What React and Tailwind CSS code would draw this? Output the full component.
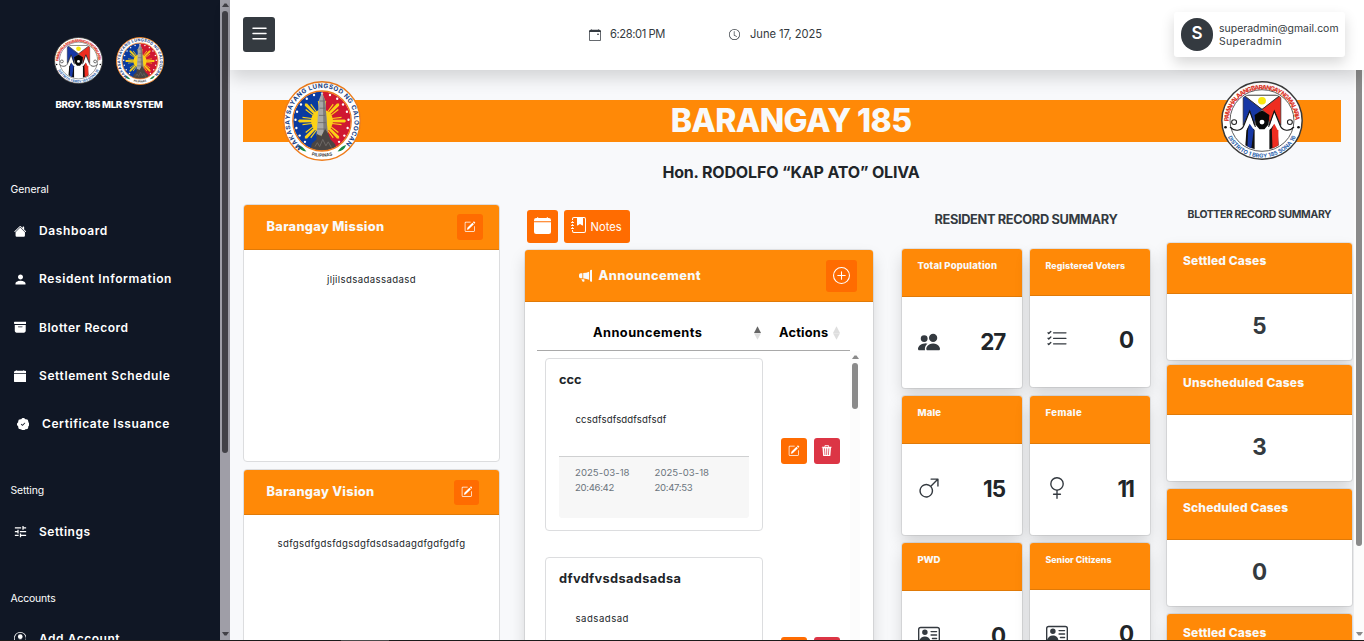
import {
  BsArchiveFill, BsCalendarEvent, BsCalendarFill, BsClock, BsGenderFemale, BsGenderMale,
  BsHouseFill, BsJournalBookmarkFill, BsList, BsListCheck, BsMegaphoneFill, BsPatchCheckFill,
  BsPencilSquare, BsPeopleFill, BsPersonCircle, BsPersonVcard, BsPlusCircle, BsTrash3Fill,
} from "react-icons/bs";
import { MdPerson, MdTune } from "react-icons/md";

function CitySeal({ className }) {
  const stars = Array.from({ length: 17 }, (_, i) => {
    const a = ((i * 17.5 - 230) * Math.PI) / 180;
    return [50 + 34 * Math.cos(a), 50 + 34 * Math.sin(a)];
  });
  return (
    <svg className={className} viewBox="0 0 100 100" preserveAspectRatio="none">
      <defs>
        <path id="cityTop" d="M24.5 83 A41.5 41.5 0 1 1 75.5 83" />
        <path id="cityBottom" d="M31 90.5 A45 45 0 0 0 69 90.5" />
        <clipPath id="cityDisc"><circle cx="50" cy="50" r="37" /></clipPath>
      </defs>
      <circle cx="50" cy="50" r="49" fill="#fff" stroke="#ee7d1c" strokeWidth="1.8" />
      <g clipPath="url(#cityDisc)">
        <rect x="10" y="10" width="40" height="80" fill="#0a3ba0" />
        <rect x="50" y="10" width="40" height="80" fill="#d01831" />
        {stars.map(([x, y], i) => <circle key={i} cx={x} cy={y} r="1.5" fill="#fff" />)}
        <g fill="#fbd116">
          <circle cx="50" cy="50" r="14" />
          {[0, 45, 90, 135, 180, 225, 270, 315].map((a) => (
            <g key={a} transform={`rotate(${a} 50 50)`}>
              <path d="M62 48.5 L79 48 L81 50 L79 52 L62 51.5 Z" />
              <path d="M63 46.4 L75 44.6 L75 46.2 L63 47.6 Z M63 53.6 L75 55.4 L75 53.8 L63 52.4 Z" />
            </g>
          ))}
        </g>
        <path d="M46 24 L50 14 L54 24 L57.5 68 L43 68 Z" fill="#a8a8a6" />
        <path d="M51 18 L54 24 L57.5 68 L52 68 Z" fill="#7d7c7b" />
        <path d="M47 25 h6 M47 34 h7 M46 43 h8 M45 52 h10 M44 60 h12" stroke="#686766" strokeWidth="1" />
        <path d="M34 90 L37 78 L43 73 L43 66 L49 69 L54 60 L58 66 L61 73 L67 79 L69 90 Z" fill="#4a4543" />
        <path d="M41 82 l3 -5 l3 5 l4 -9 l4 8 l3 -5 l4 7" fill="none" stroke="#6f6b68" strokeWidth="1.2" />
      </g>
      <circle cx="50" cy="50" r="37.5" fill="none" stroke="#ee7d1c" strokeWidth="1.6" />
      <path d="M19 80 q6 1 11 8 q-8 0 -11 -8 M81 80 q-6 1 -11 8 q8 0 11 -8" fill="#188a45" />
      <text fill="#173f86" fontFamily="Inter, sans-serif" fontSize="8" fontWeight="700">
        <textPath href="#cityTop" textLength="199" lengthAdjust="spacing">MAKASAYSAYANG LUNGSOD NG CALOOCAN</textPath>
      </text>
      <text fill="#3c3c3c" fontFamily="Inter, sans-serif" fontSize="5.6" fontWeight="700">
        <textPath href="#cityBottom" startOffset="50%" textAnchor="middle">PILIPINAS</textPath>
      </text>
    </svg>
  );
}

function BarangaySeal({ className }) {
  return (
    <svg className={className} viewBox="0 0 100 100" preserveAspectRatio="none">
      <defs>
        <path id="brgyTop" d="M9.5 51 A40.5 40.5 0 0 1 90.5 51" />
        <path id="brgyBottom" d="M6.5 66 A46 46 0 0 0 93.5 66" />
        <clipPath id="brgyDisc"><circle cx="50" cy="50" r="37.5" /></clipPath>
      </defs>
      <circle cx="50" cy="50" r="49" fill="#fff" stroke="#3a3a3a" strokeWidth="1.8" />
      <circle cx="50" cy="50" r="39" fill="#fff" stroke="#555" strokeWidth="1.2" />
      <g clipPath="url(#brgyDisc)">
        <path d="M28 18 H72 L50 36 Z" fill="#fff" stroke="#333" strokeWidth="1.2" />
        <circle cx="50" cy="25" r="4.8" fill="#f8e60f" />
        <path d="M27 18 L50 36 L43 43 L40 56 L35 38 L27 56 Z" fill="#1738a5" stroke="#222" strokeWidth="0.8" />
        <path d="M73 18 L50 36 L57 43 L60 56 L65 38 L73 56 Z" fill="#ee2d20" stroke="#222" strokeWidth="0.8" />
        <path d="M29 92 L31 62 L35 50 L41 62 L41 92 Z" fill="#111" />
        <path d="M71 92 L69 62 L65 50 L59 62 L59 92 Z" fill="#111" />
        <path d="M32 92 L33 62 L35 52 L40 62 L36 92 Z" fill="#1738a5" />
        <path d="M63 92 L62 62 L65 52 L70 62 L70 92 Z" fill="#ee2d20" />
        <path d="M27 62 L35 38 L42 62 L39 60 L35 54 L31 62 Z M73 62 L65 38 L58 62 L61 60 L65 54 L69 62 Z" fill="#fff" />
      </g>
      <path d="M11 58 C16 64 25 64 28 56 L35 38 L42 58 M89 58 C84 64 75 64 72 56 L65 38 L58 58" fill="none" stroke="#111" strokeWidth="1.4" />
      <path d="M50 37 L59 43 L58 55 L53 61 H47 L42 55 L41 43 Z" fill="#080808" />
      <circle cx="50" cy="52" r="3" fill="#fff" />
      <circle cx="16" cy="52" r="3" fill="#fff" stroke="#222" strokeWidth="1.3" />
      <circle cx="84" cy="52" r="3" fill="#fff" stroke="#222" strokeWidth="1.3" />
      <circle cx="5.5" cy="58.5" r="1.6" fill="#111" />
      <circle cx="94.5" cy="58.5" r="1.6" fill="#111" />
      <text fill="#dc3a2c" fontFamily="Inter, sans-serif" fontSize="7.8" fontWeight="800">
        <textPath href="#brgyTop" textLength="126" lengthAdjust="spacing">PAMAHALAANG BARANGAY NG MALARIA</textPath>
      </text>
      <text fill="#2a62ad" fontFamily="Inter, sans-serif" fontSize="7" fontWeight="700">
        <textPath href="#brgyBottom" startOffset="50%" textAnchor="middle">DISTRITO 1 BRGY 185 SONA 16</textPath>
      </text>
    </svg>
  );
}

function NavItem({ icon, label, tracking, className = "" }) {
  return (
    <a className={`flex h-[18px] items-center text-[12px] font-semibold leading-[18px] ${className}`}>
      <span className="flex w-[25.5px] shrink-0 text-[12.5px]">{icon}</span>
      <span className={`whitespace-nowrap ${tracking}`}>{label}</span>
    </a>
  );
}

function Arrow({ up, color }) {
  return (
    <svg width="7" height="4" viewBox="0 0 7 4" className="shrink-0">
      <path d={up ? "M0 4 L2.5 0.6 H4.5 L7 4 Z" : "M0 0 L2.5 3.4 H4.5 L7 0 Z"} fill={color} />
    </svg>
  );
}

function Sidebar() {
  return (
    <aside className="flex h-full w-[230px] shrink-0">
      <nav className="flex w-[220px] flex-col overflow-hidden bg-[#101725] text-white">
        <div className="mt-[37px] flex h-[48px] shrink-0 gap-[13px] pl-[54px]">
          <BarangaySeal className="h-[47px] w-[49px]" />
          <CitySeal className="h-[48px] w-[48px]" />
        </div>
        <h1 className="mt-[13px] h-[14px] shrink-0 whitespace-nowrap pr-[2px] text-center text-[9.6px] font-extrabold leading-[14px] tracking-[-0.38px]">BRGY. 185 MLR SYSTEM</h1>
        <h2 className="mt-[70px] h-[16px] shrink-0 pl-[10.5px] text-[10.4px] leading-[16px]">General</h2>
        <div className="mt-[24px] flex shrink-0 flex-col gap-[30.3px] pl-[13.5px]">
          <NavItem icon={<BsHouseFill />} label="Dashboard" tracking="tracking-[0.63px]" />
          <NavItem icon={<MdPerson className="-ml-px text-[15px]" />} label="Resident Information" tracking="tracking-[0.62px]" />
          <NavItem icon={<BsArchiveFill className="mb-px" />} label="Blotter Record" tracking="tracking-[0.52px]" />
          <NavItem icon={<BsCalendarFill />} label="Settlement Schedule" tracking="tracking-[0.6px]" />
          <NavItem icon={<BsPatchCheckFill />} label="Certificate Issuance" tracking="tracking-[0.57px]" className="pl-[3px]" />
        </div>
        <h2 className="mt-[49.5px] h-[16px] shrink-0 pl-[10.5px] text-[10.4px] leading-[16px] tracking-[-0.12px]">Setting</h2>
        <div className="mt-[24px] shrink-0 pl-[13.5px]">
          <NavItem icon={<MdTune className="-ml-px text-[15px]" />} label="Settings" tracking="tracking-[0.49px]" />
        </div>
        <h2 className="mt-[50px] h-[16px] shrink-0 pl-[10.5px] text-[10.4px] leading-[16px] tracking-[-0.17px]">Accounts</h2>
        <div className="mt-[23px] shrink-0 pl-[13.5px]">
          <NavItem icon={<BsPersonCircle />} label="Add Account" tracking="tracking-[0.52px]" />
        </div>
      </nav>
      <div className="flex w-[10px] flex-col items-center bg-[#9f9ea7] pt-[2.5px]">
        <Arrow up color="#424147" />
        <div className="mt-[4px] h-[442px] w-[6px] rounded-full bg-[#424147]" />
        <div className="grow" />
        <Arrow color="#424147" />
        <div className="h-[4px]" />
      </div>
    </aside>
  );
}

function Header() {
  return (
    <header className="relative z-10 flex h-[70px] w-full shrink-0 bg-white text-[#343a40] shadow-[0_8px_16px_rgba(0,0,0,0.15)]">
      <button className="ml-[13px] mt-[17px] flex h-[35px] w-[32px] items-center justify-center rounded-[3px] bg-[#343a40] pb-[3px] text-[21px] text-white">
        <BsList />
      </button>
      <div className="ml-[314px] flex h-[68px] items-center text-[11.2px]">
        <BsCalendarEvent className="mt-px text-[12px]" />
        <span className="ml-[9px] w-[55px] whitespace-nowrap tracking-[-0.41px]">6:28:01 PM</span>
        <BsClock className="ml-[64px] text-[11px]" />
        <span className="ml-[10px] whitespace-nowrap tracking-[-0.05px]">June 17, 2025</span>
      </div>
      <div className="ml-auto mr-[19px] mt-[12px] flex h-[45px] w-[171px] items-center rounded-[3px] bg-white pl-[7px] shadow-[0_6px_14px_rgba(0,0,0,0.16)]">
        <div className="flex h-[33px] w-[32px] items-center justify-center rounded-full bg-[#343a40] pb-px text-[17px] font-semibold text-white">S</div>
        <div className="ml-[6px] flex flex-col text-[10.4px] leading-[13px]">
          <span className="tracking-[0.05px]">superadmin@gmail.com</span>
          <span className="tracking-[0.39px]">Superadmin</span>
        </div>
      </div>
    </header>
  );
}

function Banner() {
  return (
    <section className="h-[134px] shrink-0 pl-[13px]">
      <div className="mt-[10px] flex h-[81px] w-[1098px] items-center">
        <div className="flex h-[42px] w-full items-center justify-between bg-[#ff8907]">
          <CitySeal className="ml-[40px] h-[80px] w-[78px] shrink-0" />
          <h2 className="mt-px whitespace-nowrap text-[32px] font-extrabold leading-[42px] tracking-[-0.65px] text-[#f8f9fa]">BARANGAY 185</h2>
          <BarangaySeal className="mb-[1px] mr-[38px] h-[79px] w-[82px] shrink-0" />
        </div>
      </div>
      <p className="mt-[-1px] w-[1096px] text-center text-[16px] font-bold leading-[24px] tracking-[-0.16px] text-[#212529]">Hon. RODOLFO “KAP ATO” OLIVA</p>
    </section>
  );
}

function TextCard({ title, titleClass, editClass, text, textClass }) {
  return (
    <article className="flex h-[258px] w-[257px] shrink-0 flex-col overflow-hidden rounded-[4px] border border-[#dcdddf] bg-white">
      <div className="flex h-[45px] shrink-0 items-center justify-between border-b border-[#e07a08] bg-[#ff8907] pl-[22.5px]">
        <h3 className={`whitespace-nowrap text-[12.8px] font-extrabold text-[#f8f9fa] ${titleClass}`}>{title}</h3>
        <button className={`flex items-center justify-center rounded-[3px] bg-[#ff6c01] pb-px text-[11.5px] text-white ${editClass}`}><BsPencilSquare /></button>
      </div>
      <p className={`text-center text-[9.6px] leading-[14px] text-[#212529] ${textClass}`}>{text}</p>
    </article>
  );
}

function Note({ title, titleClass, text, textClass }) {
  return (
    <div className="flex h-[199px] shrink-0 pl-[8px]">
      <div className="h-[173px] w-[218px] shrink-0 rounded-[4px] border border-[#dcdddf] bg-white px-[13px] pt-[12px]">
        <h4 className={`text-[12.8px] font-bold leading-[18px] text-[#212529] ${titleClass}`}>{title}</h4>
        <p className={`mt-[24px] pl-[16.5px] text-[9.6px] leading-[14px] text-[#212529] ${textClass}`}>{text}</p>
        <div className="mt-[29px] flex h-[62px] gap-[24.5px] rounded-b-[3px] border-t border-[#cfd0d1] bg-[#f7f7f7] pl-[16px] pt-[8px] text-[9.6px] leading-[15px] text-[#6c757d]">
          <span className="w-[55px]"><span className="tracking-[0.03px]">2025-03-18</span> <span className="tracking-[-0.33px]">20:46:42</span></span>
          <span className="w-[55px]"><span className="tracking-[0.03px]">2025-03-18</span> <span className="tracking-[-0.33px]">20:47:53</span></span>
        </div>
      </div>
      <div className="ml-[18px] mt-[80px] flex h-[26px] gap-[7px] text-white">
        <button className="flex w-[26px] items-center justify-center rounded-[3px] bg-[#ff6c01] pb-px text-[11.5px]"><BsPencilSquare /></button>
        <button className="flex w-[26px] items-center justify-center rounded-[3px] bg-[#dc3545] pb-px pr-px text-[11.5px]"><BsTrash3Fill /></button>
      </div>
    </div>
  );
}

function Sorter({ active }) {
  return (
    <svg width="7" height="14" viewBox="0 0 7 14" className="shrink-0">
      <path d="M3.5 0.2 L7 7 H0 Z" fill={active ? "#666" : "#dedede"} />
      <path d="M3.5 13.8 L7 7.3 H0 Z" fill="#dedede" />
    </svg>
  );
}

function Announcements() {
  return (
    <section className="ml-[25px] flex w-[348px] shrink-0 flex-col pt-[6px] text-white">
      <div className="flex gap-[6px] pl-[2px]">
        <button className="flex h-[33px] w-[31px] justify-center rounded-[3px] bg-[#ff6c01] pt-[7px] text-[17px]"><BsCalendarFill /></button>
        <button className="flex h-[33px] w-[66px] rounded-[3px] bg-[#ff6c01] pl-[7px] pt-[7px]">
          <BsJournalBookmarkFill className="text-[16px]" />
          <span className="ml-[3.5px] mt-[3px] text-[11.2px] leading-[14px]">Notes</span>
        </button>
      </div>
      <div className="mt-[7px] flex h-[420px] flex-col rounded-[4px] bg-white shadow-[0_8px_16px_rgba(0,0,0,0.15),0_0_0_1px_rgba(0,0,0,0.08)]">
        <div className="flex h-[52px] shrink-0 items-center rounded-t-[3px] border-b border-[#e07a08] bg-[#ff8907] pl-[53.5px] pr-[16px]">
          <BsMegaphoneFill className="text-[13.5px] text-[#f8f9fa]" />
          <h3 className="ml-[6.5px] text-[12.8px] font-extrabold tracking-[0.36px] text-[#f8f9fa]">Announcement</h3>
          <button className="ml-auto flex h-[32px] w-[31px] items-center justify-center rounded-[3px] bg-[#ff6c01] pb-px text-[17px]"><BsPlusCircle /></button>
        </div>
        <div className="ml-[12px] mt-[12px] flex h-[37px] w-[313px] shrink-0 items-center border-b border-[#a9a9a9] pl-[56px] pt-px text-[12.8px] font-bold text-black">
          <span className="w-[161px] tracking-[0.46px]">Announcements</span>
          <Sorter active />
          <span className="ml-[18px] w-[54px] tracking-[0.2px]">Actions</span>
          <Sorter />
        </div>
        <div className="flex grow overflow-hidden pl-[12px]">
          <div className="flex w-[313px] flex-col pt-[7px]">
            <Note title="ccc" titleClass="" text="ccsdfsdfsddfsdfsdf" textClass="tracking-[0.14px]" />
            <Note title="dfvdfvsdsadsadsa" titleClass="tracking-[0.36px]" text="sadsadsad" textClass="tracking-[0.5px]" />
          </div>
          <div className="flex w-[10px] flex-col items-center bg-[#fcfcfc] pt-[4px]">
            <Arrow up color="#8a8a8a" />
            <div className="mt-[4px] h-[46px] w-[6px] rounded-full bg-[#8a8a8a]" />
          </div>
        </div>
      </div>
    </section>
  );
}

function StatCard({ title, titleClass, headClass, bodyClass = "pb-px", icon, value, valueClass }) {
  return (
    <div className="flex w-[120px] shrink-0 flex-col overflow-hidden rounded-[3px] bg-white shadow-[0_8px_16px_rgba(0,0,0,0.15),0_0_0_1px_rgba(0,0,0,0.08)]">
      <h4 className={`shrink-0 whitespace-nowrap border-b border-[#e07a08] bg-[#ff8907] pl-[15.5px] pt-[10px] font-extrabold leading-[14px] text-[#f8f9fa] ${headClass} ${titleClass}`}>{title}</h4>
      <div className={`flex h-[91px] items-center justify-between pl-[16px] pr-[17px] text-[#343a40] ${bodyClass}`}>
        <span className="flex w-[23px] pb-px text-[22px]">{icon}</span>
        <span className={`text-[22.4px] font-bold leading-[30px] text-[#212529] ${valueClass}`}>{value}</span>
      </div>
    </div>
  );
}

function Residents() {
  return (
    <section className="ml-[29px] flex w-[248px] shrink-0 flex-col pt-[6px]">
      <h3 className="whitespace-nowrap text-center text-[12.8px] font-bold leading-[19px] tracking-[-0.36px] text-[#343a40]">RESIDENT RECORD SUMMARY</h3>
      <div className="mt-[20px] flex gap-[8px]">
        <div className="flex flex-col gap-[8px]">
          <StatCard title="Total Population" titleClass="text-[9.6px] tracking-[0.17px]" headClass="h-[48px]" icon={<BsPeopleFill />} value="27" valueClass="tracking-[-1.2px]" />
          <StatCard title="Male" titleClass="text-[9.6px] tracking-[0.15px]" headClass="h-[48px]" bodyClass="pb-[2px]" icon={<BsGenderMale />} value="15" valueClass="tracking-[-1px]" />
          <StatCard title="PWD" titleClass="text-[9.6px] tracking-[-0.15px]" headClass="h-[48px]" bodyClass="pb-[2px]" icon={<BsPersonVcard />} value="0" valueClass="tracking-[-1px]" />
        </div>
        <div className="flex flex-col gap-[8px]">
          <StatCard title="Registered Voters" titleClass="text-[8.8px] tracking-[0.1px]" headClass="h-[47px]" bodyClass="pb-[4px]" icon={<BsListCheck />} value="0" valueClass="tracking-[-1px]" />
          <div className="mt-px flex">
            <StatCard title="Female" titleClass="text-[9.6px] tracking-[0.4px]" headClass="h-[48px]" bodyClass="pb-[2px]" icon={<BsGenderFemale />} value="11" valueClass="tracking-[-1.9px]" />
          </div>
          <StatCard title="Senior Citizens" titleClass="text-[8.8px]" headClass="h-[47px]" bodyClass="pb-[3px]" icon={<BsPersonVcard />} value="0" valueClass="tracking-[-1px]" />
        </div>
      </div>
    </section>
  );
}

function CaseCard({ title, tracking, value, headClass, className = "" }) {
  return (
    <div className={`flex w-[185px] shrink-0 flex-col overflow-hidden rounded-[3px] bg-white shadow-[0_8px_16px_rgba(0,0,0,0.15),0_0_0_1px_rgba(0,0,0,0.08)] ${className}`}>
      <h4 className={`shrink-0 border-b border-[#e07a08] bg-[#ff8907] pl-[16px] text-[12px] font-extrabold leading-[18px] text-[#f8f9fa] ${headClass} ${tracking}`}>{title}</h4>
      <div className="flex h-[66px] items-center justify-center pb-[3px] text-[22.4px] font-bold text-[#343a40]">{value}</div>
    </div>
  );
}

function Blotter() {
  return (
    <section className="ml-[17px] flex w-[185px] shrink-0 flex-col pt-[3px]">
      <h3 className="whitespace-nowrap text-center text-[10.4px] font-bold leading-[16px] tracking-[-0.32px] text-[#343a40]">BLOTTER RECORD SUMMARY</h3>
      <CaseCard title="Settled Cases" tracking="tracking-[0.13px]" value="5" headClass="h-[51px] pt-[9px]" className="mt-[20px]" />
      <CaseCard title="Unscheduled Cases" tracking="tracking-[0.17px]" value="3" headClass="h-[50px] pt-[9px]" className="mt-[5px]" />
      <CaseCard title="Scheduled Cases" tracking="tracking-[0.15px]" value="0" headClass="h-[51px] pt-[10px]" className="mt-[8px]" />
      <CaseCard title="Settled Cases" tracking="tracking-[0.13px]" value="0" headClass="h-[51px] pt-[10px]" className="mt-[8px]" />
    </section>
  );
}

export default function App() {
  return (
    <div className="flex h-[641px] w-[1364px] flex-col overflow-hidden bg-[#f8f9fb] font-['Inter',sans-serif]">
      <div className="flex h-[640px] shrink-0 overflow-hidden">
        <Sidebar />
        <main className="flex w-[1134px] flex-col">
          <Header />
          <div className="flex h-[570px] w-full overflow-hidden">
            <div className="flex w-[1124px] flex-col">
              <Banner />
              <div className="flex h-[460px] pl-[13px]">
                <section className="flex w-[257px] shrink-0 flex-col gap-[7px]">
                  <TextCard title="Barangay Mission" titleClass="tracking-[0.3px]" editClass="mr-[16px] size-[26px]" text="jljilsdsadassadasd" textClass="mt-[23px] tracking-[0.39px]" />
                  <TextCard title="Barangay Vision" titleClass="tracking-[0.3px]" editClass="mr-[20px] size-[25px]" text="sdfgsdfgdsfdgsdgfdsdsadagdfgdfgdfg" textClass="mt-[22px] tracking-[0.36px]" />
                </section>
                <Announcements />
                <Residents />
                <Blotter />
              </div>
            </div>
            <div className="flex w-[10px] flex-col items-center bg-[#fcfcfc]">
              <div className="h-[476px] w-[6px] rounded-b-full bg-[#8a8a8a]" />
              <div className="grow" />
              <Arrow color="#8a8a8a" />
              <div className="h-[4px]" />
            </div>
          </div>
        </main>
      </div>
      <div className="flex h-px w-full shrink-0 bg-[#1b1b1b] pl-[341px]">
        <div className="h-px w-[48px] bg-[#4a4a4a]" />
      </div>
    </div>
  );
}
